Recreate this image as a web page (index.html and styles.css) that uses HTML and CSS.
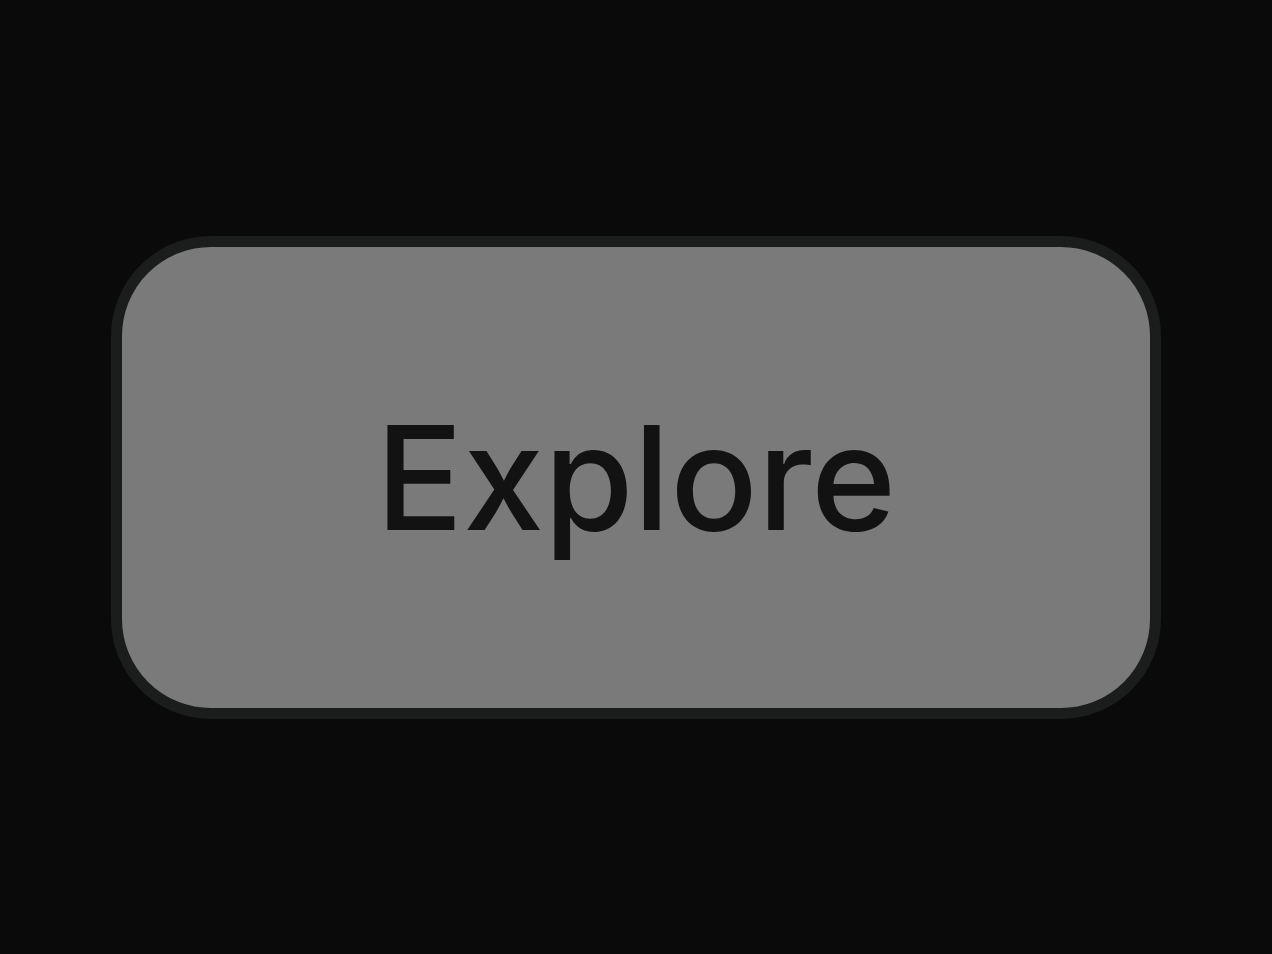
FILE: index.html
```html
<!DOCTYPE html>
<html>
<head>
<meta charset="utf-8">
<link rel="stylesheet" href="styles.css">
</head>
<body>
<main class="stage">
  <button class="explore-btn">Explore</button>
</main>
</body>
</html>
```
FILE: styles.css
```css
html, body {
  margin: 0;
  padding: 0;
  background: #0a0a0a;
}
.stage {
  width: 1272px;
  height: 954px;
  display: flex;
  align-items: center;
  justify-content: center;
}
.explore-btn {
  box-sizing: border-box;
  width: 1050px;
  height: 483px;
  border: 11px solid #1b1c1c;
  border-radius: 100px;
  background: #7a7a7a;
  color: #121212;
  font-family: Inter, "Noto Sans", sans-serif;
  font-weight: 500;
  font-size: 145px;
  letter-spacing: 0;
  padding: 0;
  display: flex;
  align-items: center;
  justify-content: center;
  cursor: pointer;
}
```
